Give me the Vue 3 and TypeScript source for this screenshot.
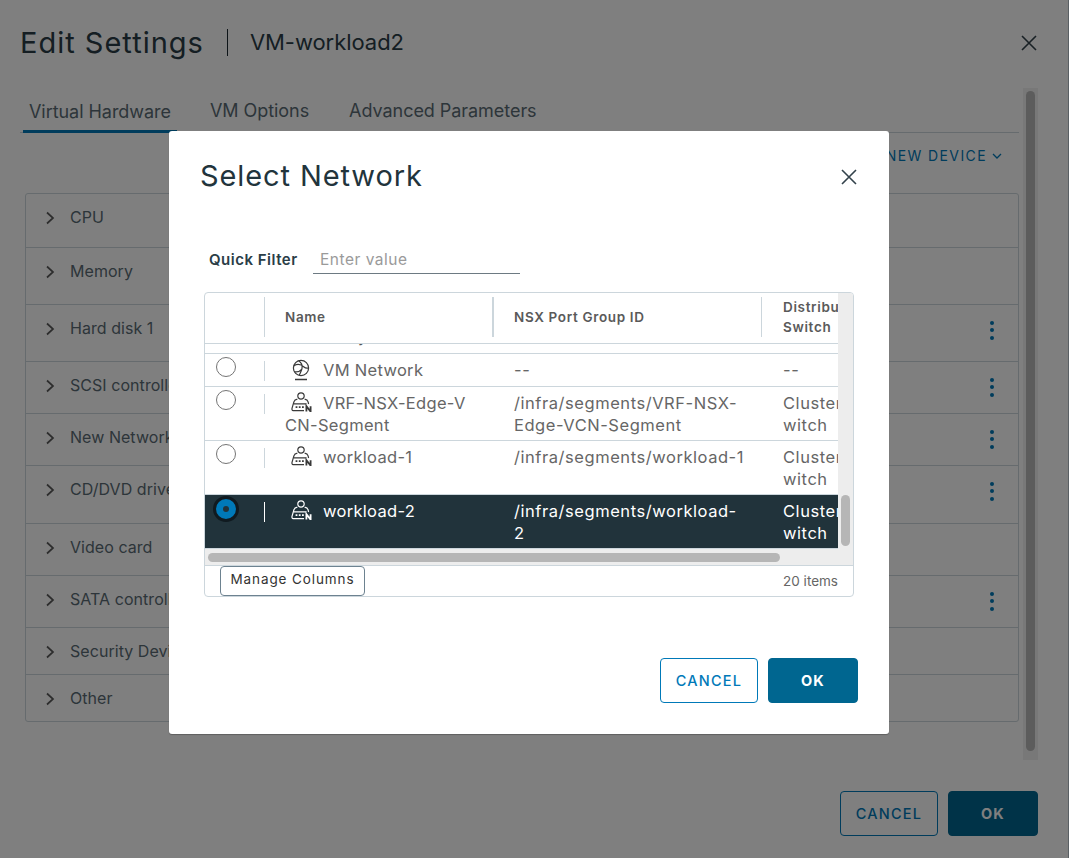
<script setup lang="ts">
interface Row { name: string; extra?: string; id: string[]; sw: string[]; icon: 'net' | 'seg'; cls: string; selected?: boolean }
const sw = ['Cluster-DS', 'witch']
const rows: Row[] = [
  { name: 'VM Network', id: ['--'], sw: ['--'], icon: 'net', cls: 'h33' },
  { name: 'VRF-NSX-Edge-V', extra: 'CN-Segment', id: ['/infra/segments/VRF-NSX-', 'Edge-VCN-Segment'], sw, icon: 'seg', cls: 'h54' },
  { name: 'workload-1', id: ['/infra/segments/workload-1'], sw, icon: 'seg', cls: 'h54' },
  { name: 'workload-2', id: ['/infra/segments/workload-', '2'], sw, icon: 'seg', cls: 'h54', selected: true }
]
const devices = [
  { label: 'CPU', h: 54, dots: false },
  { label: 'Memory', h: 57, dots: false },
  { label: 'Hard disk 1', h: 57, dots: true },
  { label: 'SCSI controller 0', h: 52, dots: true },
  { label: 'New Network', h: 52, dots: true },
  { label: 'CD/DVD drive 1', h: 58, dots: true },
  { label: 'Video card', h: 52, dots: false },
  { label: 'SATA controller 0', h: 52, dots: true },
  { label: 'Security Devices', h: 47, dots: false },
  { label: 'Other', h: 46, dots: false }
]
</script>

<template>
  <div class="page">
    <div class="back">
      <header class="back-head">
        <h1>Edit Settings</h1>
        <span class="sep"></span>
        <span class="vm">VM-workload2</span>
        <svg class="back-x" width="18" height="18" viewBox="0 0 18 18"><path d="M2 2l14 14M16 2L2 16" stroke="#33424b" stroke-width="1.6" fill="none"/></svg>
      </header>
      <div class="back-main">
        <div class="back-col">
          <nav class="tabs">
            <span class="tab on">Virtual Hardware</span>
            <span class="tab">VM Options</span>
            <span class="tab">Advanced Parameters</span>
          </nav>
          <div class="add"><span>ADD NEW DEVICE</span><svg width="10" height="6" viewBox="0 0 10 6"><path d="M1 1l4 4 4-4" stroke="#0079b8" stroke-width="1.3" fill="none"/></svg></div>
          <div class="devices">
            <div v-for="d in devices" :key="d.label" class="device" :style="{ height: d.h + 'px' }">
              <svg class="chev" width="9" height="14" viewBox="0 0 9 14"><path d="M1 1.5l6 5.5-6 5.5" stroke="#5a5a5a" stroke-width="1.7" fill="none"/></svg>
              <span class="dev-label">{{ d.label }}</span>
              <span v-if="d.dots" class="dots"><i></i><i></i><i></i></span>
            </div>
          </div>
        </div>
        <div class="back-scroll"><div class="back-thumb"></div></div>
      </div>
      <footer class="back-foot">
        <button class="btn outline dark">CANCEL</button>
        <button class="btn solid dark">OK</button>
      </footer>
    </div>

    <div class="overlay">
      <div class="modal">
        <div class="modal-head">
          <h2>Select Network</h2>
          <svg width="18" height="18" viewBox="0 0 18 18"><path d="M2 2l14 14M16 2L2 16" stroke="#33424b" stroke-width="1.6" fill="none"/></svg>
        </div>
        <div class="filter">
          <label>Quick Filter</label>
          <span class="input">Enter value</span>
        </div>
        <div class="grid">
          <div class="grid-main">
            <div class="grid-table">
              <div class="thead">
                <div class="th sel"></div>
                <div class="th name">Name</div>
                <div class="th nsx">NSX Port Group ID</div>
                <div class="th dist">Distributed<br>Switch</div>
              </div>
              <div class="peek"><span>y</span></div>
              <div v-for="r in rows" :key="r.name" class="tr" :class="[r.cls, { selected: r.selected }]">
                <div class="td sel">
                  <span class="radio"></span>
                  <span class="sel-line"></span>
                </div>
                <div class="td name">
                  <span class="ico">
                    <svg v-if="r.icon === 'net'" width="20" height="22" viewBox="0 0 20 22" fill="none" stroke="currentColor" stroke-width="1.2">
                      <circle cx="10" cy="9" r="7.6"/>
                      <path d="M3 6.6c3.5-1.8 7.2-1.2 10 1.4 1.2 1.1 2.6 1.4 4.4 1M7.6 1.8c2.8 1.8 4 4.6 3.4 7.6-.3 1.7-1.2 3.6-2.8 6.8M3.2 12.6c2.8.6 5.8-.2 8-2.8"/>
                      <path d="M4 20.5h12" stroke-width="1.3"/>
                    </svg>
                    <svg v-else width="21" height="20" viewBox="0 0 21 20" fill="none" stroke="currentColor" stroke-width="1.2">
                      <circle cx="10" cy="4" r="3.2"/>
                      <path d="M6.4 7.2C4 7.5 3.3 8.3 2.9 9.8L1 16.4c-.2 1.1.2 2.2 1.1 2.2H13M13.6 7.2c2.1.3 3.1 1.1 3.5 2.6l.5 2.2M2.9 11.8H15.6"/>
                      <path d="M4.6 15.2h1.8M7.8 15.2h1.8M11 15.2h1.8" stroke-width="1.7"/>
                      <path d="M15.4 19.6v-5.4l4.2 5.4v-5.4" stroke-width="1.8"/>
                    </svg>
                  </span><span>{{ r.name }}</span><template v-if="r.extra"><br><span>{{ r.extra }}</span></template>
                </div>
                <div class="td nsx"><div v-for="l in r.id" :key="l">{{ l }}</div></div>
                <div class="td dist"><div v-for="l in r.sw" :key="l">{{ l }}</div></div>
              </div>
            </div>
            <div class="hbar"><div class="hthumb"></div></div>
          </div>
          <div class="vbar"><div class="vthumb"></div></div>
          <div class="grid-foot">
            <button class="manage">Manage Columns</button>
            <span class="count">20 items</span>
          </div>
        </div>
        <div class="modal-foot">
          <button class="btn outline">CANCEL</button>
          <button class="btn solid">OK</button>
        </div>
      </div>
    </div>
  </div>
</template>

<style>
html, body { margin: 0; padding: 0; background: #fff; }
</style>

<style scoped>
.page {
  position: relative;
  width: 1069px;
  height: 858px;
  overflow: hidden;
  background: #fff;
  font-family: Inter, "Liberation Sans", sans-serif;
  color: #565656;
}
button { font-family: inherit; cursor: pointer; }
.back { height: 858px; display: flex; flex-direction: column; padding-left: 20px; box-sizing: border-box; border-right: 1px solid #b4c0c8; }
.back-head { display: flex; align-items: center; height: 84px; flex: none; position: relative; padding-right: 30px; }
.back-head h1 { margin: 0; font-size: 29px; font-weight: 400; color: #2a3d47; letter-spacing: 1px; }
.sep { width: 1px; height: 27px; background: #1a2830; margin: 0 22px 0 23px; }
.vm { font-size: 22px; color: #2a3d47; flex: 1; letter-spacing: -.05px; }
.back-x { margin-top: 2px; }
.back-main { display: flex; flex: 1; min-height: 0; }
.back-col { width: 999px; flex: none; }
.tabs { display: flex; border-bottom: 1px solid #ccd6dc; height: 49px; box-sizing: border-box; align-items: flex-end; }
.tab { padding: 0; margin-right: 40px; font-size: 18px; color: #5a6b74; height: 38px; line-height: 34px; box-sizing: border-box; letter-spacing: -.05px; }
.tab.on { margin-left: 3px; padding: 0 6px; border-bottom: 3px solid #0079b8; margin-bottom: -1px; margin-right: 34px; }
.tab:nth-child(2) { margin-left: -1px; }
.add { display: flex; justify-content: flex-end; align-items: center; gap: 5px; height: 45px; padding-right: 17px; color: #0079b8; font-size: 14px; letter-spacing: 1.4px; }
.devices { margin: 15px 0 0 5px; border: 1px solid #ccd6dc; border-radius: 3px; width: 994px; box-sizing: border-box; }
.device { display: flex; align-items: flex-start; gap: 15px; padding: 13px 20px 0; border-bottom: 1px solid #ccd6dc; box-sizing: border-box; }
.device:last-child { border-bottom: 0; }
.chev { margin-top: 4px; }
.dev-label { font-size: 16px; line-height: 20px; color: #5a6b74; flex: 1; letter-spacing: .05px; }
.dots { display: flex; flex-direction: column; gap: 3.3px; margin: 3px 4px 0 0; }
.dots i { width: 4px; height: 4px; border-radius: 50%; background: #0079b8; display: block; }
.back-scroll { width: 15px; margin-left: 4px; margin-top: 4px; background: #f0f0f0; height: 672px; }
.back-thumb { width: 9px; margin: 3px 3px; height: 660px; border-radius: 5px; background: #b8b8b8; }
.back-foot { height: 102px; flex: none; display: flex; justify-content: flex-end; gap: 10px; padding: 0 30px 22px 0; align-items: flex-end; box-sizing: border-box; }
.btn { width: 98px; height: 45px; border-radius: 4px; font-size: 14.5px; letter-spacing: 1.2px; font-weight: 500; box-sizing: border-box; }
.btn.solid { width: 90px; background: #006690; border: 1px solid #006690; color: #fff; font-weight: 700; }
.btn.outline { background: #fff; border: 1px solid #0079b8; color: #0079b8; }

.overlay { position: absolute; inset: 0; background: rgba(0,0,0,.5); }
.modal {
  position: absolute; left: 169px; top: 131px; width: 720px; height: 603px;
  background: #fff; border-radius: 3px; box-shadow: 0 1px 1px rgba(0,0,0,.25);
  padding: 0 31px 31px; box-sizing: border-box; display: flex; flex-direction: column;
}
.modal-head { display: flex; justify-content: space-between; align-items: center; height: 90px; flex: none; }
.modal-head svg { margin-top: 2px; }
.modal-head h2 { margin: -2px 0 0; font-size: 29px; font-weight: 400; color: #22343c; letter-spacing: .9px; }
.filter { display: flex; align-items: center; height: 36px; margin-top: 20px; padding-left: 9px; flex: none; }
.filter label { font-size: 15px; font-weight: 600; color: #2a3d47; width: 104px; letter-spacing: .5px; }
.input { width: 200px; padding: 1px 0 0 7px; height: 28px; line-height: 29px; border-bottom: 1px solid #6d7a82; font-size: 15.5px; color: #9a9a9a; box-sizing: content-box; letter-spacing: .5px; }
.grid {
  margin: 15px 4px 0 4px; width: 650px; height: 305px; border: 1px solid #ccd6dc; border-radius: 4px;
  box-sizing: border-box; display: grid; grid-template-columns: 633px 15px; grid-template-rows: 272px 31px; overflow: hidden; flex: none;
}
.grid-main { overflow: hidden; display: flex; flex-direction: column; }
.grid-table { flex: 1; min-height: 0; width: 800px; color: #565656; }
.thead { display: flex; height: 51px; border-bottom: 1px solid #ccd6dc; box-sizing: border-box; }
.sel { width: 60px; flex: none; }
.name { width: 229px; flex: none; }
.nsx { width: 268px; flex: none; }
.dist { width: 100px; flex: none; }
.th { font-size: 13.5px; font-weight: 600; color: #5a5a5a; display: flex; align-items: center; padding: 2px 0 4px 20px; box-sizing: border-box; position: relative; line-height: 20px; letter-spacing: .65px; }
.th.sel { padding: 0; }
.th.sel::after, .th.name::after, .th.nsx::after { content: ""; position: absolute; right: 0; top: 4px; bottom: 6px; width: 1px; background: #ccd6dc; }
.th.name::after { width: 2px; }
.th.dist { display: block; padding: 4px 0 0 21px; }
.peek { height: 10px; border-bottom: 1px solid #ccd6dc; box-sizing: border-box; overflow: hidden; padding-left: 153px; font-size: 16.5px; line-height: 10px; }
.peek span { display: block; margin-top: -13px; }
.tr { display: flex; border-bottom: 1px solid #ccd6dc; box-sizing: border-box; font-size: 16.5px; line-height: 22px; color: #666; }
.h33 { height: 33px; }
.h54 { height: 54px; }
.td { padding: 5px 0 0 20px; box-sizing: border-box; overflow: hidden; letter-spacing: .3px; }
.td.sel { padding: 0; position: relative; display: block; }
.td.nsx { letter-spacing: .55px; white-space: nowrap; }
.td.dist { padding-left: 21px; white-space: nowrap; letter-spacing: .55px; }
.radio { position: absolute; left: 11px; top: 3px; width: 20px; height: 20px; border: 1px solid #747474; border-radius: 50%; box-sizing: border-box; background: #fff; }
.sel-line { position: absolute; left: 59px; top: 7px; width: 1px; height: 20px; background: #ccd6dc; }
.ico { display: inline-block; width: 38px; height: 20px; vertical-align: -4px; color: #3a3a3a; padding-left: 6px; box-sizing: border-box; }
.ico svg { display: block; margin-top: -1px; }
.tr.selected { background: #21333b; color: #fff; }
.tr.selected .ico { color: #fff; }
.tr.selected .radio { left: 8px; top: 1px; width: 26px; height: 26px; background: #0079b8; border: 3px solid #101a20; }
.tr.selected .radio::after { content: ""; position: absolute; left: 7px; top: 7px; width: 6px; height: 6px; border-radius: 50%; background: #21333b; }
.tr.selected .sel-line { background: #fff; }
.hbar { height: 16px; background: #ededed; flex: none; position: relative; }
.hthumb { position: absolute; left: 3px; top: 4px; width: 572px; height: 9px; border-radius: 5px; background: #b6b6b6; }
.vbar { background: #ededed; position: relative; }
.vthumb { position: absolute; left: 3px; top: 202px; width: 9px; height: 51px; border-radius: 5px; background: #b6b6b6; }
.grid-foot { grid-column: 1 / 3; border-top: 1px solid #ccd6dc; display: flex; align-items: flex-start; justify-content: space-between; padding: 0 15px; box-sizing: border-box; }
.manage { height: 30px; width: 145px; padding: 0 0 4px; background: #fff; border: 1px solid #6d8290; border-radius: 4px; font-size: 13.5px; letter-spacing: .9px; color: #333; }
.count { font-size: 13.5px; line-height: 30px; color: #666; }
.modal-foot { display: flex; justify-content: flex-end; gap: 10px; margin-top: auto; }
</style>
